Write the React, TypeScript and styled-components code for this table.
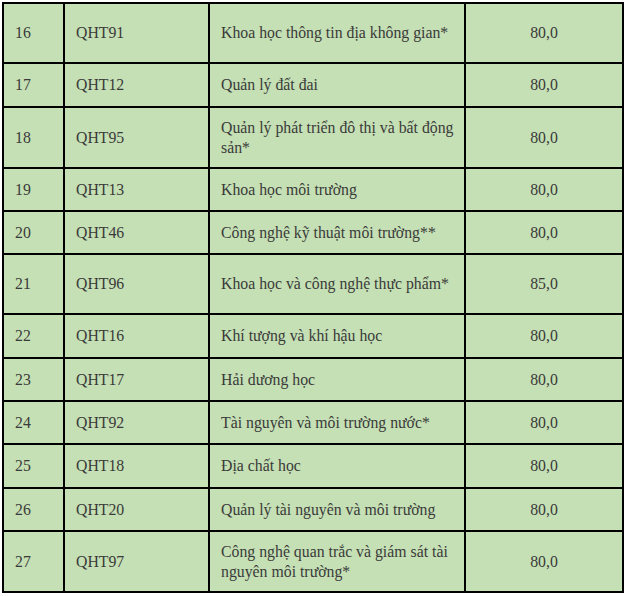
import React from 'react'
import styled, {createGlobalStyle} from 'styled-components'

type Major = {
  no: number
  code: string
  name: string
  score: string
  height: number
}

const majors: Major[] = [
  {no: 16, code: 'QHT91', name: 'Khoa học thông tin địa không gian*', score: '80,0', height: 58},
  {no: 17, code: 'QHT12', name: 'Quản lý đất đai', score: '80,0', height: 42},
  {no: 18, code: 'QHT95', name: 'Quản lý phát triển đô thị và bất động sản*', score: '80,0', height: 59},
  {no: 19, code: 'QHT13', name: 'Khoa học môi trường', score: '80,0', height: 41},
  {no: 20, code: 'QHT46', name: 'Công nghệ kỹ thuật môi trường**', score: '80,0', height: 41},
  {no: 21, code: 'QHT96', name: 'Khoa học và công nghệ thực phẩm*', score: '85,0', height: 58},
  {no: 22, code: 'QHT16', name: 'Khí tượng và khí hậu học', score: '80,0', height: 42},
  {no: 23, code: 'QHT17', name: 'Hải dương học', score: '80,0', height: 41},
  {no: 24, code: 'QHT92', name: 'Tài nguyên và môi trường nước*', score: '80,0', height: 41},
  {no: 25, code: 'QHT18', name: 'Địa chất học', score: '80,0', height: 42},
  {no: 26, code: 'QHT20', name: 'Quản lý tài nguyên và môi trường', score: '80,0', height: 41},
  {no: 27, code: 'QHT97', name: 'Công nghệ quan trắc và giám sát tài nguyên môi trường*', score: '80,0', height: 59},
]

const App: React.FC = () => {
  return (
    <>
      <GlobalStyle />
      <Page>
        <Table>
          {majors.map(m => (
            <Row key={m.no} $height={m.height}>
              <Cell>{m.no}</Cell>
              <Cell>{m.code}</Cell>
              <Cell>{m.name}</Cell>
              <Cell $center>{m.score}</Cell>
            </Row>
          ))}
        </Table>
      </Page>
    </>
  )
}
export default App

const GlobalStyle = createGlobalStyle`
  body {
    margin: 0;
    background: #ffffff;
  }
`

const Page = styled.div`
  padding: 2px 0 0 2px;
`

const Table = styled.div`
  width: 622px;
  box-sizing: border-box;
  display: flex;
  flex-direction: column;
  gap: 2px;
  padding: 2px;
  background-color: #000000;
`

const Row = styled.div<{$height: number}>`
  display: grid;
  grid-template-columns: 59px 143px 254px 156px;
  gap: 2px;
  height: ${p => p.$height}px;
`

const Cell = styled.div<{$center?: boolean}>`
  display: flex;
  align-items: center;
  justify-content: ${p => (p.$center ? 'center' : 'flex-start')};
  text-align: ${p => (p.$center ? 'center' : 'left')};
  padding: ${p => (p.$center ? '0 4px' : '0 4px 0 11px')};
  background-color: #c5e0b4;
  color: #3a3a3a;
  font-family: 'Liberation Serif', 'Times New Roman', serif;
  font-size: 15.8px;
  line-height: 20px;
`
